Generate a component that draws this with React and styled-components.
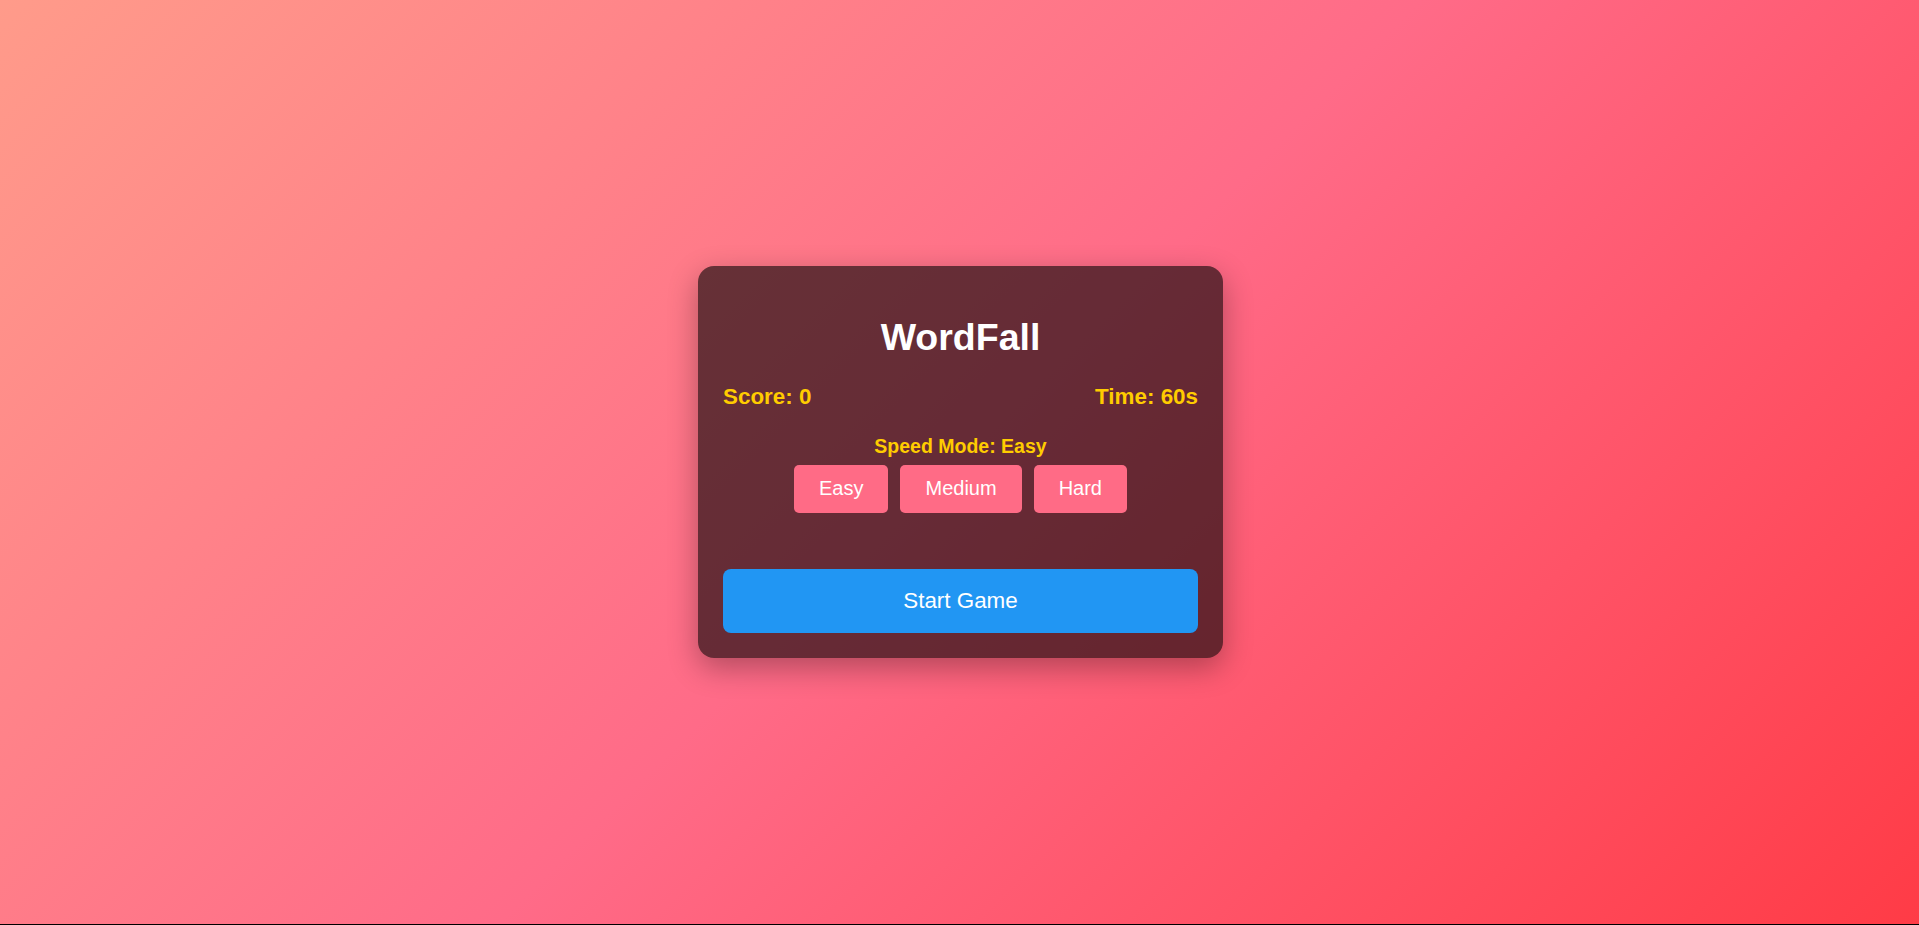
import React, { useState } from "react"
import styled, { createGlobalStyle } from 'styled-components'

const GlobalStyle = createGlobalStyle`
    html {
        background: #000;
    }
    body {
        margin: 0;
        font-family: "Liberation Sans", Arial, sans-serif;
    }
`;

const modes = ['Easy', 'Medium', 'Hard'];

function App() {
    const [mode, setMode] = useState('Easy');
    const [score] = useState(0);
    const [time] = useState(60);

    return (
        <>
            <GlobalStyle />
            <Page>
                <Card>
                    <Title>WordFall</Title>
                    <Stats>
                        <span>Score: {score}</span>
                        <span>Time: {time}s</span>
                    </Stats>
                    <SpeedLabel>Speed Mode: {mode}</SpeedLabel>
                    <ModeRow>
                        {modes.map((m) => (
                            <ModeButton key={m} onClick={() => setMode(m)}>
                                {m}
                            </ModeButton>
                        ))}
                    </ModeRow>
                    <StartButton>Start Game</StartButton>
                </Card>
            </Page>
        </>
    )
}

const Page = styled.div`
    height: calc(100vh - 1px);
    display: flex;
    align-items: center;
    justify-content: center;
    padding-left: 2px;
    box-sizing: border-box;
    background: linear-gradient(135deg, #ff9b8a 0%, #ff6b88 50%, #ff3b46 100%);
`;

const Card = styled.div`
    width: 525px;
    box-sizing: border-box;
    padding: 25px;
    border-radius: 16px;
    background: rgba(0, 0, 0, 0.6);
    box-shadow: 0 10px 30px rgba(0, 0, 0, 0.3);
    display: flex;
    flex-direction: column;
    text-align: center;
`;

const Title = styled.h1`
    margin: 25.5px 0 26px;
    font-size: 37.5px;
    line-height: 41.8px;
    font-weight: bold;
    color: #fff;
`;

const Stats = styled.div`
    display: flex;
    justify-content: space-between;
    font-size: 22.4px;
    line-height: 24.6px;
    font-weight: bold;
    color: #ffcc00;
`;

const SpeedLabel = styled.div`
    margin-top: 26.8px;
    font-size: 19.5px;
    line-height: 21.6px;
    font-weight: bold;
    color: #ffcc00;
`;

const ModeRow = styled.div`
    margin-top: 7px;
    display: flex;
    justify-content: center;
    gap: 12px;
`;

const ModeButton = styled.button`
    height: 48px;
    padding: 0 25px;
    border: none;
    border-radius: 5px;
    background: #ff6b86;
    color: #fff;
    font-family: "Liberation Sans", Arial, sans-serif;
    font-size: 20px;
    cursor: pointer;
`;

const StartButton = styled.button`
    margin-top: 56px;
    height: 64px;
    width: 100%;
    border: none;
    border-radius: 8px;
    background: #2196f3;
    color: #fff;
    font-family: "Liberation Sans", Arial, sans-serif;
    font-size: 22.4px;
    cursor: pointer;
`;

export default App
